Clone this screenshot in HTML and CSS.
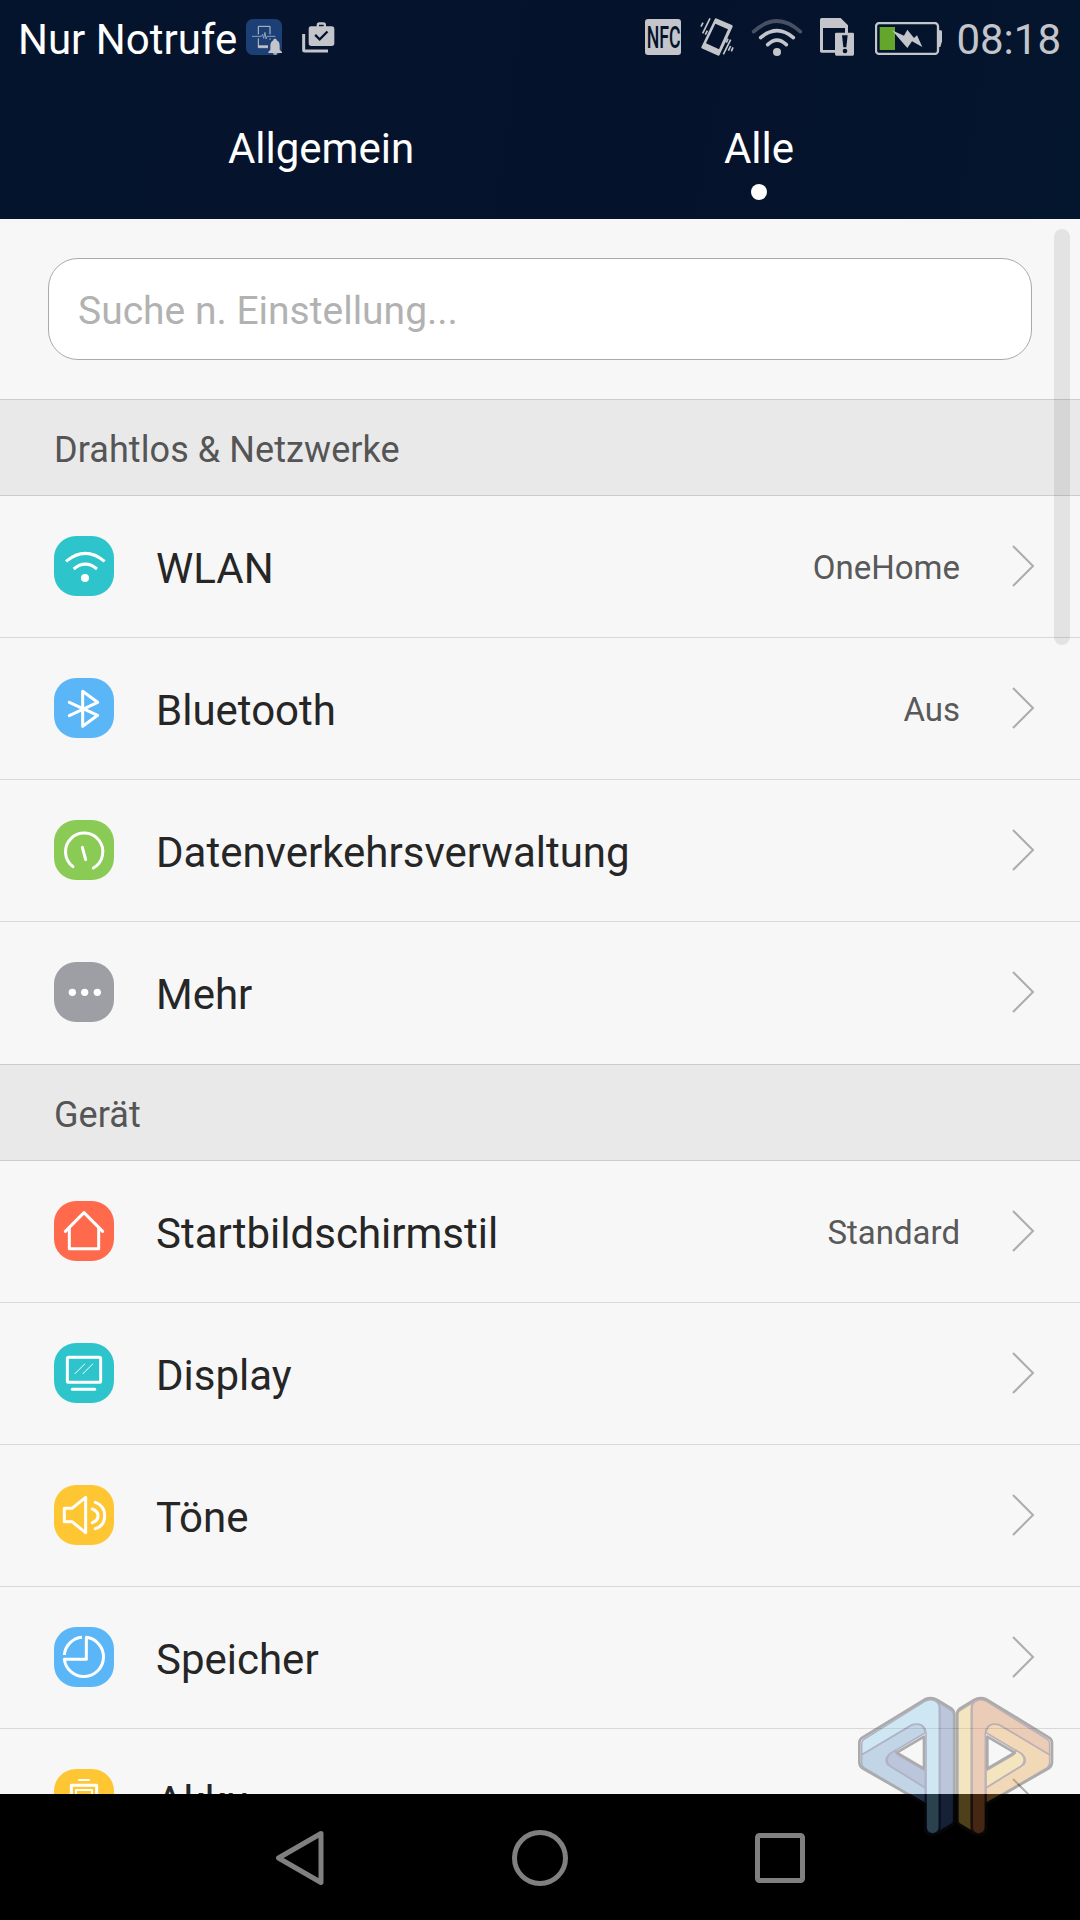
FILE: index.html
```html
<!DOCTYPE html>
<html lang="de">
<head>
    <meta charset="UTF-8">
    <meta name="viewport" content="width=device-width, initial-scale=1.0">
    <title>Einstellungen</title>
    <link rel="stylesheet" href="styles.css">
</head>
<body>

    <header>
        <div class="statusBar">
            <span class="carrier">Nur Notrufe</span>
            <svg class="appIcon" width="37" height="37" viewBox="0 0 111 111">
                <rect width="108" height="108" rx="20" fill="#1c3f75"/>
                <path d="M37 46V22H72V46M37 58V86H66M72 58V62" fill="none" stroke="#c3c5cb" stroke-width="3"/>
                <path d="M36 82H66" stroke="#c3c5cb" stroke-width="6"/>
                <path d="M18 52H46L50 46L53 58L57 40L60 60L63 52H88" fill="none" stroke="#8fa0bb" stroke-width="3"/>
                <path d="M87 59C91 59 92 61 92 64C99 67 101 73 101 81V92L108 99V102H67V99L73 92V81C73 73 76 67 82 64C82 61 83 59 87 59ZM81 103H94C93 109 82 109 81 103Z" fill="#c3c5cb"/>
            </svg>
            <svg class="shopIcon" width="33" height="31" viewBox="0 0 99 93">
                <path d="M5 36V84Q5 87 8 87H78" fill="none" stroke="#c3c5cb" stroke-width="9"/>
                <path fill-rule="evenodd" fill="#c3c5cb" d="M27 13H44V9Q44 1 52 1H64Q72 1 72 9V13H89Q97 13 97 21V64Q97 72 89 72H28Q20 72 20 64V21Q20 13 27 13ZM51 13H65V8H51ZM42 36L37 41L53 57L79 31L74 26L53 47Z"/>
            </svg>

            <div class="statusRight">
                <div class="nfc"><span>NFC</span></div>
                <svg class="vibrateIcon" width="34" height="38" viewBox="0 0 102 114">
                    <path d="M48 5L94 25L55 109L8 88Z" fill="#c3c5cb" stroke="#c3c5cb" stroke-width="8" stroke-linejoin="round"/>
                    <path d="M46 17L84 34L57 94L18 76Z" fill="#05122b"/>
                    <path d="M3 26L9 14M8 46L30 1M16 50L22 38M70 109L92 65M85 98L92 84M94 100L99 88M79 74L84 62" fill="none" stroke="#c3c5cb" stroke-width="5"/>
                </svg>
                <svg class="wifiIcon" width="52" height="38" viewBox="0 0 156 114">
                    <g fill="none" stroke="#c3c5cb" stroke-width="11" stroke-linecap="round">
                        <path d="M8 41Q78 -23 148 41" opacity=".35"/>
                        <path d="M29 59Q78 17 127 59"/>
                        <path d="M50 80Q78 53 106 80"/>
                    </g>
                    <circle cx="78" cy="102" r="12" fill="#c3c5cb"/>
                </svg>
                <svg class="simIcon" width="35" height="39" viewBox="0 0 105 117">
                    <path fill-rule="evenodd" fill="#c3c5cb" d="M5 0H62L84 22V44H98Q102 44 102 48V109Q102 113 98 113H49Q45 113 45 109V104H5Q0 104 0 100V5Q0 0 5 0ZM9 30V96H45V48Q45 44 49 44H75V30Z"/>
                    <path d="M66 52H83L79 88H70Z" fill="#05122b"/>
                    <circle cx="75" cy="99" r="7" fill="#05122b"/>
                </svg>
                <svg class="batteryIcon" width="67" height="33" viewBox="0 0 201 99">
                    <rect x="3" y="3" width="186" height="93" rx="10" fill="none" stroke="#c3c5cb" stroke-width="7"/>
                    <path d="M189 25H197Q201 25 201 29V58L196 75H189Z" fill="#c3c5cb"/>
                    <rect x="14" y="15" width="46" height="69" fill="#64a52c"/>
                    <path d="M51 25L87 41L97 23L117 48L126 40L142 75L111 58L97 78L76 54Z" fill="#c3c5cb"/>
                </svg>
                <span class="clock">08:18</span>
            </div>
        </div>

        <div class="tabs">
            <div class="tab">Allgemein</div>
            <div class="tab active">Alle</div>
        </div>
    </header>

    <main>
        <div class="search">
            <input type="text" placeholder="Suche n. Einstellung...">
        </div>

        <h2>Drahtlos &amp; Netzwerke</h2>
        <ul>
            <li>
                <svg class="icon teal" viewBox="0 0 180 180">
                    <path d="M36 76Q94 28 152 76M59 99Q94 70 129 99" stroke-linecap="butt"/>
                    <circle cx="93" cy="126" r="12" class="solid"/>
                </svg>
                <span class="label">WLAN</span>
                <span class="value">OneHome</span>
                <svg class="chevron" viewBox="0 0 24 44"><path d="M2 2L22 22L2 42"/></svg>
            </li>
            <li>
                <svg class="icon blue" viewBox="0 0 180 180">
                    <path d="M46 73L131 112L86 145V40L131 73L46 113"/>
                </svg>
                <span class="label">Bluetooth</span>
                <span class="value">Aus</span>
                <svg class="chevron" viewBox="0 0 24 44"><path d="M2 2L22 22L2 42"/></svg>
            </li>
            <li>
                <svg class="icon green" viewBox="0 0 180 180">
                    <path d="M57 140A56 56 0 1 1 118 144M85 82L95 119"/>
                </svg>
                <span class="label">Datenverkehrsverwaltung</span>
                <svg class="chevron" viewBox="0 0 24 44"><path d="M2 2L22 22L2 42"/></svg>
            </li>
            <li>
                <svg class="icon gray" viewBox="0 0 180 180">
                    <g class="solid">
                        <circle cx="55" cy="91" r="11"/>
                        <circle cx="92" cy="91" r="11"/>
                        <circle cx="130" cy="91" r="11"/>
                    </g>
                </svg>
                <span class="label">Mehr</span>
                <svg class="chevron" viewBox="0 0 24 44"><path d="M2 2L22 22L2 42"/></svg>
            </li>
        </ul>

        <h2>Gerät</h2>
        <ul>
            <li>
                <svg class="icon red" viewBox="0 0 180 180">
                    <path d="M34 91L90 35L146 91M46 82V143H134V82"/>
                </svg>
                <span class="label">Startbildschirmstil</span>
                <span class="value">Standard</span>
                <svg class="chevron" viewBox="0 0 24 44"><path d="M2 2L22 22L2 42"/></svg>
            </li>
            <li>
                <svg class="icon teal" viewBox="0 0 180 180">
                    <rect x="40" y="43" width="100" height="75" rx="5"/>
                    <path d="M55 139H122"/>
                    <path d="M63 92L92 63M87 92L116 63" stroke-width="3"/>
                </svg>
                <span class="label">Display</span>
                <svg class="chevron" viewBox="0 0 24 44"><path d="M2 2L22 22L2 42"/></svg>
            </li>
            <li>
                <svg class="icon yellow" viewBox="0 0 180 180">
                    <path d="M31 70H54L95 37V143L54 110H31ZM115 72Q132 78 132 92Q132 107 115 113M124 52Q152 62 152 92Q152 122 124 131"/>
                </svg>
                <span class="label">Töne</span>
                <svg class="chevron" viewBox="0 0 24 44"><path d="M2 2L22 22L2 42"/></svg>
            </li>
            <li>
                <svg class="icon blue" viewBox="0 0 180 180">
                    <path d="M31 84A58 58 0 0 1 84 31M97 31A59 59 0 1 1 31 97H97Z" stroke-linecap="butt"/>
                </svg>
                <span class="label">Speicher</span>
                <svg class="chevron" viewBox="0 0 24 44"><path d="M2 2L22 22L2 42"/></svg>
            </li>
            <li>
                <svg class="icon yellow" viewBox="0 0 180 180">
                    <path d="M75 33H105" class="thin"/>
                    <rect x="52" y="49" width="76" height="96"/>
                    <rect x="66" y="63" width="48" height="68" class="thin"/>
                </svg>
                <span class="label">Akku</span>
                <svg class="chevron" viewBox="0 0 24 44"><path d="M2 2L22 22L2 42"/></svg>
            </li>
        </ul>
        <div class="scrollbar"></div>
    </main>

    <nav>
        <svg width="50" height="56" viewBox="0 0 50 56"><path d="M46 3.500L3.500 28L46 52.500Z"/></svg>
        <svg width="56" height="56" viewBox="0 0 56 56"><circle cx="28" cy="28" r="25.500"/></svg>
        <svg width="50" height="50" viewBox="0 0 50 50"><rect x="2.500" y="2.500" width="45" height="45" rx="2"/></svg>
    </nav>

    <!-- Watermark -->
    <svg class="watermark" viewBox="0 0 720 540">
        <defs>
            <path id="outline" fill-rule="evenodd" d="M255 58Q275 50 290 59L336 87Q343 92 343 100V425Q343 431 337 435L292 462Q277 468 263 462Q255 456 255 445V372L68 265Q58 258 58 246V188Q58 178 68 172ZM252 170L170 218L252 266Z"/>
            <path id="bar" d="M65 224V190Q65 182 73 177L254 64Q273 54 288 64Q298 71 298 84V442Q296 460 278 462Q260 460 258 442V160Q255 126 216 134Z"/>
            <path id="band" d="M65 224L216 134Q250 124 256 158L150 221Q132 236 142 253L256 323V372L72 263Q65 258 65 248Z"/>
            <path id="inner" d="M150 221L166 211Q168 220 176 226L256 272V323L150 258Q132 240 150 221Z"/>
            <path id="side" d="M296 68L333 91Q341 96 341 104V421Q341 428 335 432L296 455Q300 450 300 440V84Z"/>
        </defs>
        <g opacity=".33" stroke-width="5" stroke-linejoin="round">
            <g stroke="#242a68">
                <use href="#side" fill="#4362a8"/>
                <use href="#band" fill="#5892c9"/>
                <use href="#inner" fill="#4362a8"/>
                <use href="#bar" fill="#7dc9eb"/>
                <use href="#outline" fill="none" stroke="#141414" stroke-width="8"/>
            </g>
            <g stroke="#4b2338" transform="translate(694 0) scale(-1 1)">
                <use href="#side" fill="#ebc349"/>
                <use href="#band" fill="#e59b37"/>
                <use href="#inner" fill="#ebc349"/>
                <use href="#bar" fill="#d57737"/>
                <use href="#outline" fill="none" stroke="#141414" stroke-width="8"/>
            </g>
        </g>
    </svg>

</body>
</html>
```
FILE: styles.css
```css
* {
    box-sizing: border-box;
}

body {
    font-family: Roboto, sans-serif;
    display: flex;
    flex-direction: column;
    position: relative;
    width: 1080px;
    height: 1920px;
    margin: 0;
    overflow: hidden;
    background-color: #f7f7f7;
}

svg {
    display: block;
    flex-shrink: 0;
}

header {
    height: 219px;
    flex-shrink: 0;
    background: linear-gradient(100deg, #05142d, #05122b 60%, #04152e);
    color: #ffffff;
}

/* Status bar */
.statusBar {
    display: flex;
    align-items: flex-start;
    height: 75px;
    padding: 0 19px 0 18px;
    font-size: 42px;
    line-height: 79px;
}

.appIcon {
    margin: 19px 0 0 9px;
}

.shopIcon {
    margin: 22px 0 0 19px;
}

.statusRight {
    display: flex;
    align-items: flex-start;
    margin-left: auto;
    color: #c3c5cb;
}

.nfc {
    display: flex;
    justify-content: center;
    width: 36px;
    height: 36px;
    margin-top: 19px;
    border-radius: 3px;
    background-color: #c3c5cb;
    color: #05122b;
}

.nfc span {
    font-size: 31px;
    line-height: 37px;
    font-weight: 500;
    transform: scaleX(0.57);
}

.vibrateIcon {
    margin: 18px 0 0 19px;
}

.wifiIcon {
    margin: 18px 0 0 17px;
}

.simIcon {
    margin: 18px 0 0 17px;
}

.batteryIcon {
    margin: 22px 0 0 20px;
}

.clock {
    margin-left: 14px;
}

/* Tabs */
.tabs {
    display: flex;
    justify-content: center;
    height: 144px;
}

.tab {
    width: 438px;
    padding-top: 49px;
    font-size: 42px;
    line-height: 50px;
    text-align: center;
}

.active::after {
    content: "";
    display: block;
    width: 16px;
    height: 16px;
    margin: 10px auto 0;
    border-radius: 50%;
    background-color: #ffffff;
}

/* Settings list */
main {
    position: relative;
    flex: 1;
    min-height: 0;
    overflow: hidden;
}

.search {
    height: 180px;
    padding: 39px 48px 0;
}

.search input {
    display: block;
    width: 100%;
    height: 102px;
    padding: 4px 29px 0;
    border: 1px solid #aaaaaa;
    border-radius: 30px;
    background-color: #ffffff;
    font-family: inherit;
    font-size: 39px;
}

.search input::placeholder {
    color: #b2b2b2;
}

h2 {
    height: 97px;
    margin: 0;
    padding-left: 54px;
    border-top: 1px solid #cccccc;
    border-bottom: 1px solid #cccccc;
    background-color: #e9e9e9;
    color: #555555;
    font-size: 36px;
    font-weight: 400;
    letter-spacing: 0.08px;
    line-height: 101px;
}

ul {
    margin: 0;
    padding: 0;
    list-style: none;
}

li {
    display: flex;
    align-items: center;
    height: 142px;
    padding: 0 45px 0 54px;
    border-bottom: 1px solid #d8d8d8;
}

li:last-child {
    border-bottom-color: transparent;
}

.icon {
    width: 60px;
    height: 60px;
    margin-top: -1px;
    border-radius: 22px;
    fill: none;
    stroke: #ffffff;
    stroke-width: 9;
    stroke-linecap: round;
    stroke-linejoin: round;
}

.thin {
    stroke-width: 6;
}

.solid {
    fill: #ffffff;
    stroke: none;
}

.teal { background-color: #2dc4cb; }
.blue { background-color: #5bb6f8; }
.green { background-color: #8acb55; }
.gray { background-color: #9e9fa5; }
.red { background-color: #ff6a4d; }
.yellow { background-color: #ffc634; }

.label {
    flex: 1;
    margin-left: 42px;
    padding-top: 4px;
    color: #262626;
    font-size: 42px;
}

.value {
    margin-right: 51px;
    padding-top: 2px;
    color: #595959;
    font-size: 33px;
}

.chevron {
    width: 24px;
    height: 44px;
    margin-top: -1px;
    fill: none;
    stroke: #adadad;
    stroke-width: 2;
}

.scrollbar {
    position: absolute;
    top: 10px;
    right: 10px;
    width: 16px;
    height: 416px;
    border-radius: 8px;
    background-color: rgba(0, 0, 0, 0.08);
}

/* Navigation bar */
nav {
    display: flex;
    justify-content: space-between;
    align-items: center;
    height: 126px;
    flex-shrink: 0;
    padding: 2px 275px 0;
    background-color: #000000;
}

nav svg {
    fill: none;
    stroke: #808080;
    stroke-width: 5;
    stroke-linejoin: round;
}

.watermark {
    position: absolute;
    left: 840px;
    top: 1680px;
    width: 240px;
    height: 180px;
}
```
